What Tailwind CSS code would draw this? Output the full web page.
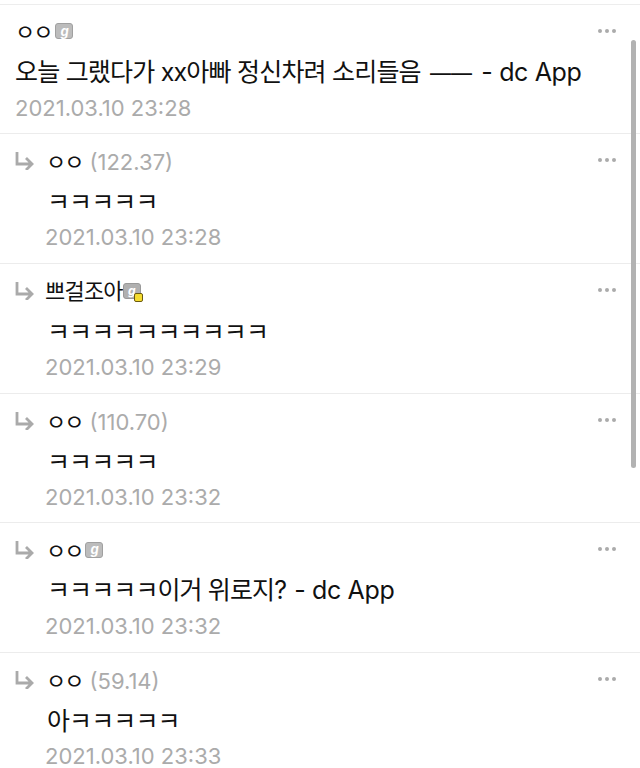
<!DOCTYPE html>
<html lang="ko">
<head>
    <meta charset="UTF-8">
    <title>Comments</title>
    <script src="https://cdn.jsdelivr.net/npm/@tailwindcss/browser@4"></script>
</head>
<body class="relative h-[768px] w-[640px] overflow-hidden bg-white font-['Inter','Noto_Sans_CJK_KR',sans-serif] text-[#111]">
    <div class="h-[4px] bg-white"></div>
    <ul class="border-t border-[#ededed]">
        <!-- first comment has no reply arrow -->
        <li class="relative h-[129px] border-b border-[#ececec] pl-[15px]">
            <div class="flex h-[52px] items-center">
                <span class="mt-[2px] text-[22px] tracking-[-2px]">ㅇㅇ</span>
                <span class="ml-[4px] flex h-[16px] w-[18px] items-center justify-center rounded-[3px] border border-[#a0a0a0] bg-[#bcbcbc] text-[13px] font-bold italic leading-none text-white">g</span>
            </div>
            <p class="text-[25px] leading-[30px] tracking-[-0.8px]">오늘 그랬다가 xx아빠 정신차려 소리들음 <span class="ml-[3px] text-[21px] tracking-normal">——</span> <span class="ml-[3px] tracking-[-0.35px]">- dc App</span></p>
            <p class="mt-[5px] text-[22px] leading-[28px] text-[#ababab]">2021.03.10 23:28</p>
            <div class="absolute right-[24px] top-[24px] flex gap-[3px]">
                <i class="h-[4px] w-[4px] rounded-full bg-[#ababab]"></i><i class="h-[4px] w-[4px] rounded-full bg-[#ababab]"></i><i class="h-[4px] w-[4px] rounded-full bg-[#ababab]"></i>
            </div>
        </li>

        <li class="relative h-[130px] border-b border-[#ececec] pl-[15px]">
            <div class="flex h-[53px] items-center">
                <svg class="mr-[12px] h-[18px] w-[19px]" viewBox="0 0 19 18" fill="none" stroke="#aaa" stroke-width="2.8"><path d="M2 0V12H17M11 6L17 12L11 18"/></svg>
                <span class="mt-[4px] text-[22px] tracking-[-2px]">ㅇㅇ</span>
                <span class="ml-[7px] mt-[4px] text-[22px] text-[#ababab]">(122.37)</span>
            </div>
            <p class="pl-[32px] text-[25px] leading-[30px] tracking-[-0.9px]">ㅋㅋㅋㅋㅋ</p>
            <p class="mt-[6px] pl-[30px] text-[22px] leading-[28px] text-[#ababab]">2021.03.10 23:28</p>
            <div class="absolute right-[24px] top-[24px] flex gap-[3px]">
                <i class="h-[4px] w-[4px] rounded-full bg-[#ababab]"></i><i class="h-[4px] w-[4px] rounded-full bg-[#ababab]"></i><i class="h-[4px] w-[4px] rounded-full bg-[#ababab]"></i>
            </div>
        </li>

        <li class="relative h-[130px] border-b border-[#ececec] pl-[15px]">
            <div class="flex h-[53px] items-center">
                <svg class="mr-[11px] h-[18px] w-[19px]" viewBox="0 0 19 18" fill="none" stroke="#aaa" stroke-width="2.8"><path d="M2 0V12H17M11 6L17 12L11 18"/></svg>
                <span class="mt-[2px] text-[22px] tracking-[-0.8px]">쁘걸조아</span>
                <span class="relative flex h-[16px] w-[18px] items-center justify-center rounded-[3px] border border-[#999] bg-[#b0b0b0] text-[12px] font-bold italic leading-none text-white">g
                    <i class="absolute -bottom-[4px] -right-[3px] h-[9px] w-[9px] rounded-[2px] border border-[#6b5a10] bg-[#f5dc30]"></i>
                </span>
            </div>
            <p class="pl-[32px] text-[25px] leading-[30px] tracking-[-0.9px]">ㅋㅋㅋㅋㅋㅋㅋㅋㅋㅋ</p>
            <p class="mt-[6px] pl-[30px] text-[22px] leading-[28px] text-[#ababab]">2021.03.10 23:29</p>
            <div class="absolute right-[24px] top-[24px] flex gap-[3px]">
                <i class="h-[4px] w-[4px] rounded-full bg-[#ababab]"></i><i class="h-[4px] w-[4px] rounded-full bg-[#ababab]"></i><i class="h-[4px] w-[4px] rounded-full bg-[#ababab]"></i>
            </div>
        </li>

        <li class="relative h-[129px] border-b border-[#ececec] pl-[15px]">
            <div class="flex h-[53px] items-center">
                <svg class="mr-[12px] h-[18px] w-[19px]" viewBox="0 0 19 18" fill="none" stroke="#aaa" stroke-width="2.8"><path d="M2 0V12H17M11 6L17 12L11 18"/></svg>
                <span class="mt-[4px] text-[22px] tracking-[-2px]">ㅇㅇ</span>
                <span class="ml-[7px] mt-[4px] text-[22px] text-[#ababab]">(110.70)</span>
            </div>
            <p class="pl-[32px] text-[25px] leading-[30px] tracking-[-0.9px]">ㅋㅋㅋㅋㅋ</p>
            <p class="mt-[6px] pl-[30px] text-[22px] leading-[28px] text-[#ababab]">2021.03.10 23:32</p>
            <div class="absolute right-[24px] top-[24px] flex gap-[3px]">
                <i class="h-[4px] w-[4px] rounded-full bg-[#ababab]"></i><i class="h-[4px] w-[4px] rounded-full bg-[#ababab]"></i><i class="h-[4px] w-[4px] rounded-full bg-[#ababab]"></i>
            </div>
        </li>

        <li class="relative h-[130px] border-b border-[#ececec] pl-[15px]">
            <div class="flex h-[53px] items-center">
                <svg class="mr-[12px] h-[18px] w-[19px]" viewBox="0 0 19 18" fill="none" stroke="#aaa" stroke-width="2.8"><path d="M2 0V12H17M11 6L17 12L11 18"/></svg>
                <span class="mt-[4px] text-[22px] tracking-[-2px]">ㅇㅇ</span>
                <span class="ml-[3px] flex h-[16px] w-[18px] items-center justify-center rounded-[3px] border border-[#a0a0a0] bg-[#bcbcbc] text-[13px] font-bold italic leading-none text-white">g</span>
            </div>
            <p class="-mt-[1px] pl-[32px] text-[25px] leading-[30px] tracking-[-0.9px]">ㅋㅋㅋㅋㅋ이거 위로지? <span class="ml-[2px] tracking-[-0.35px]">- dc App</span></p>
            <p class="mt-[7px] pl-[30px] text-[22px] leading-[28px] text-[#ababab]">2021.03.10 23:32</p>
            <div class="absolute right-[24px] top-[24px] flex gap-[3px]">
                <i class="h-[4px] w-[4px] rounded-full bg-[#ababab]"></i><i class="h-[4px] w-[4px] rounded-full bg-[#ababab]"></i><i class="h-[4px] w-[4px] rounded-full bg-[#ababab]"></i>
            </div>
        </li>

        <li class="relative h-[130px] pl-[15px]">
            <div class="flex h-[53px] items-center">
                <svg class="mr-[12px] h-[18px] w-[19px]" viewBox="0 0 19 18" fill="none" stroke="#aaa" stroke-width="2.8"><path d="M2 0V12H17M11 6L17 12L11 18"/></svg>
                <span class="mt-[4px] text-[22px] tracking-[-2px]">ㅇㅇ</span>
                <span class="ml-[7px] mt-[4px] text-[22px] text-[#ababab]">(59.14)</span>
            </div>
            <p class="pl-[32px] text-[25px] leading-[30px] tracking-[-0.9px]">아ㅋㅋㅋㅋㅋ</p>
            <p class="mt-[6px] pl-[30px] text-[22px] leading-[28px] text-[#ababab]">2021.03.10 23:33</p>
            <div class="absolute right-[24px] top-[24px] flex gap-[3px]">
                <i class="h-[4px] w-[4px] rounded-full bg-[#ababab]"></i><i class="h-[4px] w-[4px] rounded-full bg-[#ababab]"></i><i class="h-[4px] w-[4px] rounded-full bg-[#ababab]"></i>
            </div>
        </li>
    </ul>

    <!-- overlay scrollbar -->
    <div class="absolute right-[4px] top-[40px] h-[428px] w-[5px] rounded-full bg-[#b2b2b2]"></div>
</body>
</html>
